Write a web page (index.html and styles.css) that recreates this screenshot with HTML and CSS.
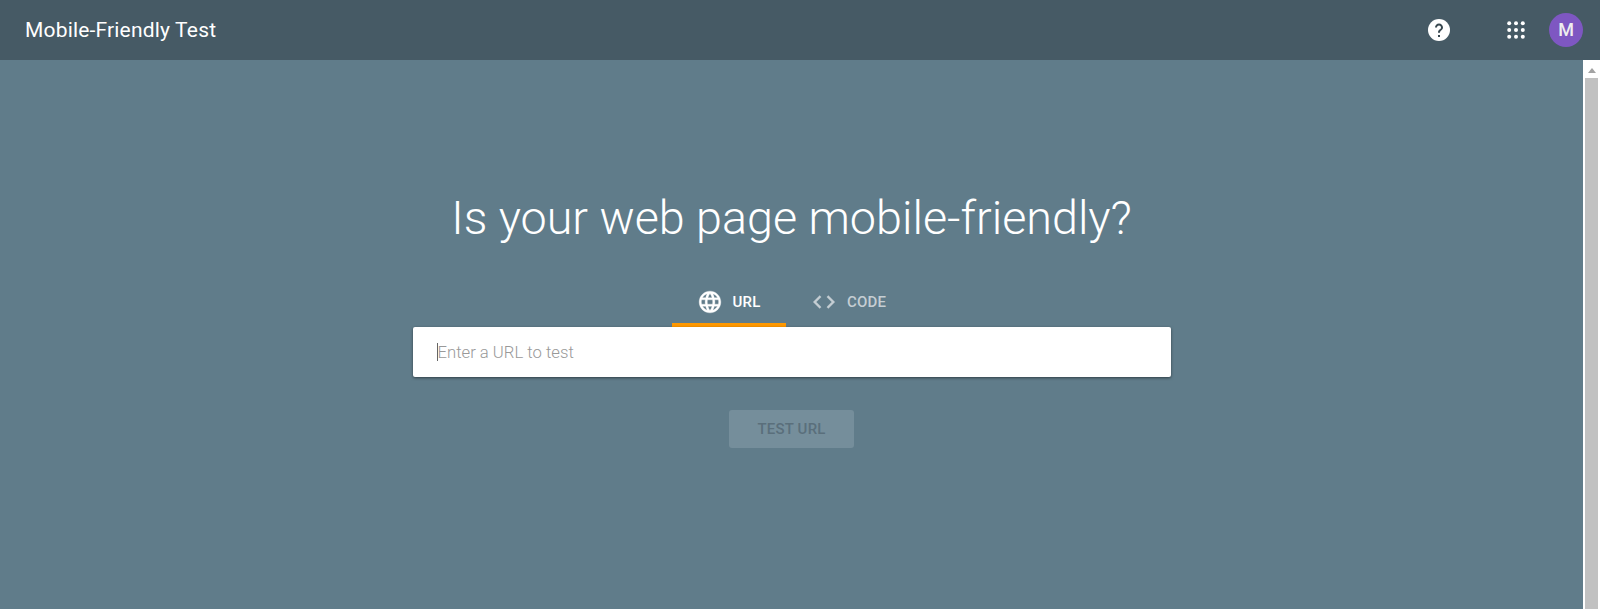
FILE: index.html
```html
<!DOCTYPE html>
<html lang="en">
<head>
  <meta charset="UTF-8" />
  <title>Mobile-Friendly Test</title>
  <link rel="stylesheet" href="styles.css">
</head>
<body>
  <header class="topbar">
    <div class="topbar-title">Mobile-Friendly Test</div>
    <svg class="help-icon" viewBox="0 0 24 24" width="24" height="24">
      <circle cx="12" cy="12" r="11" fill="#fff" />
      <path fill="#37474f" d="M11 16.9h2v2h-2zM12 5.6c-2.2 0-4 1.8-4 4h2c0-1.1.9-2 2-2s2 .9 2 2c0 2-3 1.8-3 5.2h2c0-2.3 3-2.6 3-5.2 0-2.2-1.8-4-4-4z" />
    </svg>
    <svg class="apps-icon" viewBox="0 0 18 18" width="18" height="18" fill="#fff">
      <circle cx="2.2" cy="2.2" r="2" />
      <circle cx="9" cy="2.2" r="2" />
      <circle cx="15.8" cy="2.2" r="2" />
      <circle cx="2.2" cy="9" r="2" />
      <circle cx="9" cy="9" r="2" />
      <circle cx="15.8" cy="9" r="2" />
      <circle cx="2.2" cy="15.8" r="2" />
      <circle cx="9" cy="15.8" r="2" />
      <circle cx="15.8" cy="15.8" r="2" />
    </svg>
    <div class="avatar">M</div>
  </header>

  <div class="page">
    <main class="content">
      <h1>Is your web page mobile-friendly?</h1>

      <div class="tabs">
        <div class="tab active">
          <svg class="tab-icon" viewBox="0 0 24 24" width="26" height="26">
            <path d="M11.99 2C6.47 2 2 6.48 2 12s4.47 10 9.99 10C17.52 22 22 17.52 22 12S17.52 2 11.99 2zm6.93 6h-2.95c-.32-1.25-.78-2.45-1.38-3.56 1.84.63 3.37 1.91 4.33 3.56zM12 4.04c.83 1.2 1.48 2.53 1.91 3.96h-3.82c.43-1.43 1.08-2.76 1.91-3.96zM4.26 14C4.1 13.36 4 12.69 4 12s.1-1.36.26-2h3.38c-.08.66-.14 1.32-.14 2 0 .68.06 1.34.14 2H4.26zm.82 2h2.95c.32 1.25.78 2.45 1.38 3.56-1.84-.63-3.37-1.9-4.33-3.56zm2.95-8H5.08c.96-1.66 2.49-2.93 4.33-3.56C8.81 5.55 8.35 6.75 8.03 8zM12 19.96c-.83-1.2-1.48-2.53-1.91-3.96h3.82c-.43 1.43-1.08 2.76-1.91 3.96zM14.34 14H9.66c-.09-.66-.16-1.32-.16-2 0-.68.07-1.35.16-2h4.68c.09.65.16 1.32.16 2 0 .68-.07 1.34-.16 2zm.25 5.56c.6-1.11 1.06-2.31 1.38-3.56h2.95c-.96 1.65-2.49 2.93-4.33 3.56zM16.36 14c.08-.66.14-1.32.14-2 0-.68-.06-1.34-.14-2h3.38c.16.64.26 1.31.26 2s-.1 1.36-.26 2h-3.38z" />
          </svg>
          <span>URL</span>
        </div>
        <div class="tab">
          <svg class="tab-icon" viewBox="0 0 24 24" width="26" height="26">
            <path d="M9.4 16.6L4.8 12l4.6-4.6L8 6l-6 6 6 6 1.4-1.4zm5.2 0l4.6-4.6-4.6-4.6L16 6l6 6-6 6-1.4-1.4z" />
          </svg>
          <span>CODE</span>
        </div>
      </div>

      <div class="url-box">
        <span class="caret"></span>
        <span class="placeholder">Enter a URL to test</span>
      </div>

      <button class="test-btn" disabled>TEST URL</button>
    </main>

    <div class="scrollbar">
      <div class="scroll-arrow"></div>
      <div class="scroll-thumb"></div>
    </div>
  </div>
</body>
</html>
```

FILE: styles.css
```css
html, body {
  height: 100%;
}
body {
  margin: 0;
  display: flex;
  flex-direction: column;
  overflow: hidden;
  background-color: #607c8a;
  font-family: Roboto, Arial, sans-serif;
  color: #fff;
}
.topbar {
  height: 60px;
  flex: none;
  display: flex;
  align-items: center;
  padding: 0 17px 0 25px;
  box-sizing: border-box;
  background-color: #465a65;
}
.topbar-title {
  flex: 1;
  font-size: 21px;
  letter-spacing: 0.18px;
}
.help-icon {
  margin-right: 56px;
}
.apps-icon {
  margin-right: 24px;
}
.avatar {
  width: 34px;
  height: 34px;
  border-radius: 50%;
  background-color: #7e57c2;
  font-size: 18px;
  font-weight: 500;
  line-height: 34px;
  text-align: center;
  color: #eee;
}
.page {
  flex: 1;
  display: flex;
  min-height: 0;
}
.content {
  flex: 1;
  display: flex;
  flex-direction: column;
  align-items: center;
}
h1 {
  margin: 0;
  padding-top: 128px;
  font-size: 46.7px;
  line-height: 60px;
  font-weight: 300;
}
.tabs {
  display: flex;
  margin-top: 29px;
}
.tab {
  height: 50px;
  width: 126px;
  display: flex;
  align-items: center;
  justify-content: center;
  gap: 10px;
  box-sizing: border-box;
  padding-top: 4px;
  border-bottom: 4px solid transparent;
  font-size: 15px;
  font-weight: 500;
  letter-spacing: 0.2px;
  color: #c5ced3;
}
.tab.active {
  width: 114px;
  color: #fff;
  border-bottom-color: #ff9800;
}
.tab-icon {
  fill: currentColor;
  stroke: currentColor;
  stroke-width: 0.3;
}
.url-box {
  width: 758px;
  height: 50px;
  flex: none;
  display: flex;
  align-items: center;
  padding-left: 24px;
  box-sizing: border-box;
  background-color: #fff;
  border-radius: 2px;
  box-shadow: 0 1px 3px rgba(0, 0, 0, 0.5);
}
.caret {
  width: 1px;
  height: 18px;
  background-color: #666;
}
.placeholder {
  font-size: 16.7px;
  font-weight: 300;
  color: #999;
}
.test-btn {
  width: 125px;
  height: 38px;
  margin-top: 33px;
  padding: 0;
  border: 0;
  border-radius: 3px;
  background-color: #758e9b;
  font-family: Roboto, Arial, sans-serif;
  font-size: 15px;
  font-weight: 500;
  letter-spacing: 0.2px;
  color: #5a6f7b;
}
.scrollbar {
  width: 17px;
  flex: none;
  display: flex;
  flex-direction: column;
  align-items: center;
  background-color: #fff;
}
.scroll-arrow {
  width: 0;
  height: 0;
  margin: 8px 0 5px;
  border-left: 4px solid transparent;
  border-right: 4px solid transparent;
  border-bottom: 5px solid #a3a3a3;
}
.scroll-thumb {
  width: 13px;
  flex: 1;
  background-color: #c1c1c1;
}
```
